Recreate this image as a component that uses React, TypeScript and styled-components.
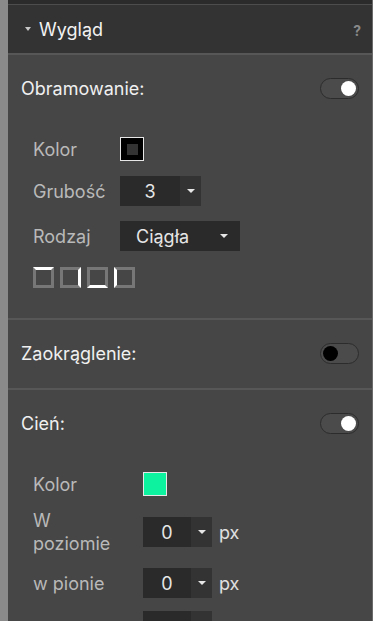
import React from "react";
import styled, { createGlobalStyle } from "styled-components";

const GlobalStyle = createGlobalStyle`
  html, body {
    margin: 0;
    padding: 0;
    background: #464646;
  }
  body {
    font-family: Inter, "Noto Sans", sans-serif;
    -webkit-font-smoothing: antialiased;
  }
`;

const Page = styled.div`
  display: flex;
  width: 373px;
  height: 621px;
  overflow: hidden;
`;

const SideStrip = styled.div`
  width: 8px;
  flex-shrink: 0;
  background: #8a8a8a;
`;

const Panel = styled.div`
  flex: 1;
  background: #464646;
  border-right: 1px solid #6a6a6a;
`;

const TopEdge = styled.div`
  height: 4px;
  background: #2b2b2b;
  border-bottom: 1px solid #4d4d4d;
`;

const Header = styled.div`
  display: flex;
  align-items: center;
  height: 48px;
  padding: 0 11px 0 17px;
  background: #333333;
  border-bottom: 2px solid #575757;
`;

const Caret = styled.span`
  width: 0;
  height: 0;
  border-left: 3.5px solid transparent;
  border-right: 3.5px solid transparent;
  border-top: 4px solid #c8c8c8;
  margin-right: 8px;
`;

const Title = styled.span`
  flex: 1;
  color: #f2f2f2;
  font-size: 18px;
`;

const Help = styled.span`
  color: #8a8a8a;
  font-size: 14px;
  font-weight: 700;
  margin-top: 2px;
`;

const Section = styled.div<{ $last?: boolean; $bottom?: number }>`
  padding: 23px 13px ${(p) => (p.$last ? 0 : p.$bottom ?? 25)}px 13px;
  border-bottom: ${(p) => (p.$last ? "none" : "2px solid #575757")};
`;

const SectionHead = styled.div`
  display: flex;
  align-items: center;
  justify-content: space-between;
  height: 20px;
`;

const SectionTitle = styled.span`
  color: #f0f0f0;
  font-size: 18px;
`;

const Toggle = styled.div<{ $on: boolean }>`
  box-sizing: border-box;
  width: 39px;
  height: 21px;
  border-radius: 11px;
  background: #4b4b4b;
  border: 1px solid #2c2c2c;
  display: flex;
  align-items: center;
  justify-content: ${(p) => (p.$on ? "flex-end" : "flex-start")};
  padding: 0 2px;

  &::after {
    content: "";
    width: 15px;
    height: 15px;
    border-radius: 50%;
    background: ${(p) => (p.$on ? "#ffffff" : "#000000")};
  }
`;

const Rows = styled.div<{ $labelWidth: number; $gap: number }>`
  display: grid;
  grid-template-columns: ${(p) => p.$labelWidth}px auto 1fr;
  align-items: center;
  row-gap: ${(p) => p.$gap}px;
  margin-top: 39px;
  padding-left: 12px;
`;

const Label = styled.span`
  color: #b9b9b9;
  font-size: 18px;
  line-height: 23px;
  grid-column: 1;
`;

const Swatch = styled.div<{ $color: string }>`
  box-sizing: border-box;
  width: 24px;
  height: 24px;
  border: 1px solid #e6e6e6;
  background: ${(p) => p.$color};
  display: flex;
  align-items: center;
  justify-content: center;
  grid-column: 2 / span 2;
`;

const SwatchInner = styled.div`
  width: 11px;
  height: 11px;
  background: #333333;
`;

const NumberBox = styled.div`
  display: flex;
  height: 30px;
`;

const NumberValue = styled.div<{ $width: number }>`
  width: ${(p) => p.$width}px;
  background: #2a2a2a;
  color: #e6e6e6;
  font-size: 18px;
  display: flex;
  align-items: center;
  justify-content: center;
`;

const DropButton = styled.div<{ $width: number }>`
  width: ${(p) => p.$width}px;
  background: #333333;
  display: flex;
  align-items: center;
  justify-content: center;
`;

const SmallCaret = styled.span`
  width: 0;
  height: 0;
  border-left: 4px solid transparent;
  border-right: 4px solid transparent;
  border-top: 4px solid #e6e6e6;
`;

const Unit = styled.span`
  color: #e0e0e0;
  font-size: 18px;
  margin-left: 7px;
`;

const Select = styled.div`
  grid-column: 2 / span 2;
  box-sizing: border-box;
  width: 120px;
  height: 30px;
  background: #2a2a2a;
  display: flex;
  align-items: center;
  justify-content: space-between;
  padding: 0 12px 0 16px;
  color: #e6e6e6;
  font-size: 18px;
`;

const SideIcons = styled.div`
  grid-column: 1 / span 3;
  display: flex;
  gap: 6px;
  margin-top: 1px;
`;

type Side = "top" | "right" | "bottom" | "left";

const SideIcon = styled.div<{ $side: Side }>`
  box-sizing: border-box;
  width: 21px;
  height: 21px;
  border: 3px solid #777777;
  border-${(p) => p.$side}-color: #ffffff;
`;

const Field = styled.div`
  grid-column: 2 / span 2;
  display: flex;
  align-items: center;
`;

function NumberInput({
  value,
  valueWidth,
  buttonWidth,
  showCaret = true,
}: {
  value: string;
  valueWidth: number;
  buttonWidth: number;
  showCaret?: boolean;
}) {
  return (
    <NumberBox>
      <NumberValue $width={valueWidth}>{value}</NumberValue>
      <DropButton $width={buttonWidth}>{showCaret && <SmallCaret />}</DropButton>
    </NumberBox>
  );
}

const sides: Side[] = ["top", "right", "bottom", "left"];

export default function App() {
  return (
    <>
      <GlobalStyle />
      <Page>
        <SideStrip />
        <Panel>
          <TopEdge />
          <Header>
            <Caret />
            <Title>Wygląd</Title>
            <Help>?</Help>
          </Header>

          <Section $bottom={30}>
            <SectionHead>
              <SectionTitle>Obramowanie:</SectionTitle>
              <Toggle $on />
            </SectionHead>
            <Rows $labelWidth={87} $gap={15}>
              <Label>Kolor</Label>
              <Swatch $color="#000000">
                <SwatchInner />
              </Swatch>

              <Label>Grubość</Label>
              <Field>
                <NumberInput value="3" valueWidth={60} buttonWidth={21} />
              </Field>

              <Label>Rodzaj</Label>
              <Select>
                Ciągła
                <SmallCaret />
              </Select>

              <SideIcons>
                {sides.map((s) => (
                  <SideIcon key={s} $side={s} />
                ))}
              </SideIcons>
            </Rows>
          </Section>

          <Section>
            <SectionHead>
              <SectionTitle>Zaokrąglenie:</SectionTitle>
              <Toggle $on={false} />
            </SectionHead>
          </Section>

          <Section $last>
            <SectionHead>
              <SectionTitle>Cień:</SectionTitle>
              <Toggle $on />
            </SectionHead>
            <Rows $labelWidth={110} $gap={13}>
              <Label>Kolor</Label>
              <Swatch $color="#0cf29e" />

              <Label>
                W<br />
                poziomie
              </Label>
              <Field>
                <NumberInput value="0" valueWidth={48} buttonWidth={21} />
                <Unit>px</Unit>
              </Field>

              <Label>w pionie</Label>
              <Field>
                <NumberInput value="0" valueWidth={48} buttonWidth={21} />
                <Unit>px</Unit>
              </Field>

              <Label>&nbsp;</Label>
              <Field>
                <NumberInput value="" valueWidth={48} buttonWidth={21} showCaret={false} />
              </Field>
            </Rows>
          </Section>
        </Panel>
      </Page>
    </>
  );
}
